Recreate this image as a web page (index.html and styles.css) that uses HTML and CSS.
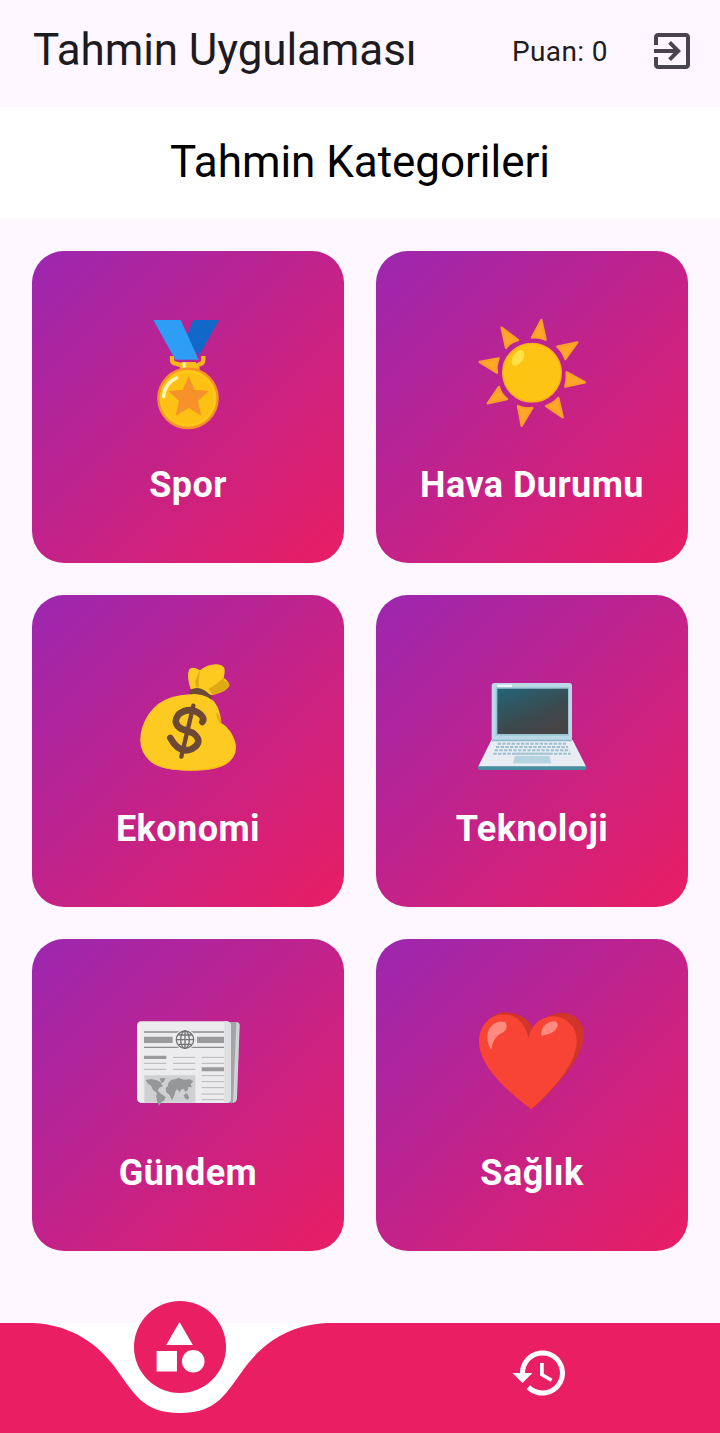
FILE: index.html
```html
<!DOCTYPE html>
<html lang="tr">
<head>
<meta charset="utf-8">
<title>Tahmin Uygulaması</title>
<link rel="stylesheet" href="styles.css">
</head>
<body>
<div class="app">
  <header class="app-bar">
    <h1 class="app-title">Tahmin Uygulaması</h1>
    <span class="score">Puan: 0</span>
    <svg class="exit" viewBox="0 0 24 24"><path d="M10.09 15.59L11.5 17l5-5-5-5-1.41 1.41L12.67 11H3v2h9.67l-2.58 2.59zM19 3H5c-1.11 0-2 .9-2 2v4h2V5h14v14H5v-4H3v4c0 1.1.89 2 2 2h14c1.1 0 2-.9 2-2V5c0-1.1-.9-2-2-2z"/></svg>
  </header>
  <h2 class="heading">Tahmin Kategorileri</h2>
  <main class="grid">
    <section class="card">
      <svg class="emoji" viewBox="-21 0 390 420">
        <path d="M190 60h77l-60 107-40-50z" fill="#1268c9"/>
        <path d="M126 168v13q0 9 12 10l18 5v12h46v-12l14-6q4-3 4-12v-10" fill="none" stroke="#f9b51c" stroke-width="13" stroke-linejoin="round"/>
        <path d="M154 186h44v22h-44z" fill="#fbbd1b"/><path d="M158 187h9v16h-9z" fill="#fff3c0"/>
        <path d="M70 60h82l54 119h-70z" fill="#2d9df5"/>
        <circle cx="174" cy="295" r="89" fill="#fdc113" stroke="#f68f2c" stroke-width="7"/>
        <circle cx="174" cy="295" r="80" fill="none" stroke="#ffca1c" stroke-width="5"/>
        <path d="M176 227l18 42 43 4-33 29 10 45-38-23-39 23 10-45-32-29 43-4z" fill="#f7922a"/>
        <path d="M101 290q4-41 39-56" fill="none" stroke="#fff3bd" stroke-width="10" stroke-linecap="round"/>
      </svg>
      <span class="label">Spor</span>
    </section>
    <section class="card">
      <svg class="emoji" viewBox="-9 -30 390 420">
        <g fill="#ffa827" stroke="#fb9f2b" stroke-width="7" stroke-linejoin="round">
          <path d="M214 30l13 59q-22-9-41-6z"/><path d="M322 97l-36 50q-7-22-24-37z"/>
          <path d="M345 217l-59 13q6-21 4-43z"/><path d="M278 322l-50-34q22-7 37-24z"/>
          <path d="M155 347l-11-59q21 10 43 6z"/><path d="M53 280l34-49q5 21 24 36z"/>
          <path d="M29 156l57-11q-9 23-5 43z"/><path d="M95 53l49 37q-22 5-36 23z"/>
        </g>
        <circle cx="186" cy="188" r="88" fill="#fdc413" stroke="#f8ad20" stroke-width="4"/>
        <ellipse cx="144" cy="144" rx="15" ry="26" transform="rotate(35 144 144)" fill="#ffe148"/>
      </svg>
      <span class="label">Hava Durumu</span>
    </section>
    <section class="card">
      <svg class="emoji" viewBox="-21 -33 390 420">
        <path d="M182 102Q168 62 178 43q5-7 18-4l14 7q22-19 52-18 27 4 22 25l-3 15q15 10 17 22-8 14-28 21-14 7-25 9z" fill="#fdca22"/>
        <path d="M236 102q25-15 45-34l1 9q15 4 17 15-8 14-28 21l-22 8z" fill="#dfa915"/>
        <path d="M210 46q-11 22-14 34l-6-22q5 20 8 39l8 1q0-26 4-52z" fill="#e2a916"/>
        <path d="M178 118Q66 123 36 220q-18 62 26 100 30 27 119 27 101-1 129-40 20-34-10-79-11-16-26-24-4-55-34-76-28-14-62-10z" fill="#fdca22"/>
        <path d="M259 172q18 12 14 35-14-8-14-35z" fill="#eaae18"/>
        <path d="M64 321q38 24 117 23 97-1 126-34-22 38-126 37-78 0-117-26z" fill="#f5b51d"/>
        <path d="M181 105q29-18 62 17l2 12q-28-21-67-16-4-7 3-13z" fill="#6c4936"/>
        <path d="M217 201q8-10-5-22-31-26-64-3-24 28 7 46l34 12q33 26-2 47-39 18-66-32" fill="none" stroke="#6c4936" stroke-width="20" stroke-linecap="round"/>
        <path d="M190 152l-36 153" stroke="#6c4936" stroke-width="13" stroke-linecap="round"/>
      </svg>
      <span class="label">Ekonomi</span>
    </section>
    <section class="card">
      <svg class="emoji" viewBox="-9 -78 390 420">
        <defs><linearGradient id="screen" x1="0" y1="0" x2=".65" y2="1"><stop stop-color="#236578"/><stop offset=".65" stop-color="#3b4a4f"/><stop offset="1" stop-color="#454344"/></linearGradient></defs>
        <rect x="65" y="39" width="241" height="177" rx="8" fill="#b9d9e6"/>
        <path d="M82 44h44v8H82z" fill="#edf6fa"/><rect x="77" y="52" width="220" height="145" rx="3" fill="#9ac4d3"/>
        <path d="M82 56h212v136H82z" fill="url(#screen)"/>
        <path d="M64 210h244l41 81H24z" fill="#e7edf3"/>
        <path d="M68 209h236l4 5H64z" fill="#8cb8c9"/>
        <g stroke="#9ebfd0" stroke-width="6" stroke-dasharray="10 4">
          <path d="M83 221h205M78 231h216M74 241h225M70 251h232"/>
        </g>
        <path d="M135 251h105" stroke="#a9c8d6" stroke-width="6"/>
        <path d="M135 258h103l6 22H129z" fill="#b4d2e0"/>
        <path d="M24 289h325v7q-1 4-6 4H31q-6 0-7-5z" fill="#478d9f"/>
      </svg>
      <span class="label">Teknoloji</span>
    </section>
    <section class="card">
      <svg class="emoji" viewBox="-6 -66 390 420">
        <path d="M290 36h45q8 0 8 9l-8 218q-1 16-15 16h-30z" fill="#a4a5a8"/>
        <path d="M334 37q10 0 10 9l-8 218q-1 14-12 14z" fill="#d1d2d5"/>
        <path d="M47 34h257q14 0 14 15v216q0 13-12 14H52q-15-1-16-16V49q0-14 11-15z" fill="#ececee"/>
        <path d="M302 34q16 0 16 15v216q0 13-14 14h-6V34z" fill="#dedfe1"/>
        <path d="M43 40v224q1 11 10 14-16 1-17-15V49q0-9 7-9z" fill="#fafafa"/>
        <path d="M57 66h240M57 112h240" stroke="#8b8b8d" stroke-width="4"/>
        <path d="M57 80h86v19H57zM216 80h81v19h-81zM57 137h67v10H57zM230 172h67v12h-67z" fill="#9a9a9c"/>
        <g stroke="#b5b6b8" stroke-width="3"><path d="M57 160h67M57 178h67M144 142h67M144 160h67M144 178h67M230 142h67M230 160h67M230 197h67M230 215h67M230 233h67M230 252h67M230 269h67"/></g>
        <circle cx="180" cy="89" r="31" fill="#ececee"/>
        <g fill="none" stroke="#737375" stroke-width="4"><circle cx="180" cy="89" r="26"/><ellipse cx="180" cy="89" rx="13" ry="26"/><path d="M180 63v52M154 89h52M160 75h40M160 103h40"/></g>
        <path d="M58 196h153v82H58z" fill="#cfd0d2"/>
        <g fill="#969799">
          <path d="M62 210l17-3 17 4 11 6 6 12-10 4-5 9 10 9 14 10-4 10-9 6-7 10-5-12-4-17 3-9-12-9-6-13-9-6z"/>
          <path d="M104 205l18-1-6 12-7 3zM130 218l9-9 14-2 7-3 18 5 17-1 10 6-8 8 3 10-10-1-2 10-7 5-5-9-8 2-4 8-8-10-5 8-4 14-6 12-7-15-10-9-2-12 7-8zM176 256l10-7 7 14-5 6-7-3z"/>
        </g>
      </svg>
      <span class="label">Gündem</span>
    </section>
    <section class="card">
      <svg class="emoji" viewBox="6 -36 390 420">
        <path d="M208 98q-9-38-47-53Q111 26 79 52l129 270q112-103 141-178 20-56-10-86-30-30-79-14-36 15-52 54z" fill="#d1342b"/>
        <path d="M190 114Q180 60 134 45 80 36 53 80q-24 45 4 101 30 63 142 147 109-99 130-168 19-64-20-95-39-31-85-4-25 17-34 53z" fill="#f84434"/>
        <path d="M79 150Q57 115 74 84q19-25 46-18 12 14-3 29-35 15-38 55zM229 107q-3-30 27-42 24-6 22 14-9 24-49 28z" fill="#ff8b7f"/>
      </svg>
      <span class="label">Sağlık</span>
    </section>
  </main>
  <nav class="nav">
    <svg class="nav-shape" viewBox="0 0 720 110" preserveAspectRatio="none">
      <path d="M0 0H33C73 2 98 22 114 43C134 70 142 90 180 90C218 90 226 70 246 43C262 22 287 2 327 0H720V110H0z"/>
    </svg>
    <div class="nav-item">
      <div class="active">
        <svg viewBox="0 0 24 24"><path d="M12 2l-5.25 9h10.5zM3 13.4h8v8H3z"/><circle cx="17.4" cy="17.4" r="4.45"/></svg>
      </div>
    </div>
    <div class="nav-item">
      <svg class="history" viewBox="0 0 24 24"><path d="M13 3c-4.97 0-9 4.03-9 9H1l3.89 3.89.07.14L9 12H6c0-3.87 3.13-7 7-7s7 3.13 7 7-3.13 7-7 7c-1.93 0-3.68-.79-4.94-2.06l-1.42 1.42C8.27 19.99 10.51 21 13 21c4.97 0 9-4.03 9-9s-4.03-9-9-9zm-1 5v5l4.28 2.54.72-1.21-3.5-2.08V8H12z"/></svg>
    </div>
  </nav>
</div>
</body>
</html>
```
FILE: styles.css
```css
* { box-sizing: border-box; }
body { margin: 0; font-family: Roboto, sans-serif; background: #fef7ff; }
svg { display: block; flex: none; }
.app { height: 1433px; display: flex; flex-direction: column; }
.app-bar { height: 107px; padding: 0 24px 5px 33px; display: flex; align-items: center; color: #1d1b20; }
.app-title { margin: 0; padding-bottom: 2px; flex: 1; font-size: 44px; font-weight: 400; line-height: 56px; letter-spacing: -.1px; }
.score { font-size: 28px; letter-spacing: .4px; margin-right: 40px; }
.exit { width: 48px; height: 48px; fill: #49454f; }
.heading { margin: 0; height: 112px; background: #fff; color: #000; font-size: 44px; font-weight: 400; line-height: 110px; letter-spacing: -.05px; text-align: center; }
.grid { flex: 1; padding: 32px; display: grid; grid-template-columns: 312px 312px; grid-auto-rows: 312px; gap: 32px; }
.card { border-radius: 32px; background: linear-gradient(135deg, #9c27b0, #e91e63); display: flex; flex-direction: column; align-items: center; padding-top: 49px; }
.emoji { width: 130px; height: 140px; }
.label { margin-top: 24px; color: #fff; font-size: 36px; font-weight: 700; line-height: 42px; letter-spacing: .45px; }
.nav { position: relative; height: 110px; background: #fff; display: grid; grid-template-columns: 1fr 1fr; }
.nav-shape { position: absolute; inset: 0; width: 100%; height: 100%; fill: #e91e63; }
.nav-item { position: relative; display: flex; justify-content: center; }
.active { width: 92px; height: 92px; margin-top: -22px; border-radius: 50%; background: #e91e63; display: flex; align-items: center; justify-content: center; }
.active svg { width: 61px; height: 61px; margin-right: 1px; fill: #fff; }
.history { width: 60px; height: 60px; margin-top: 20px; fill: #fff; }
```
